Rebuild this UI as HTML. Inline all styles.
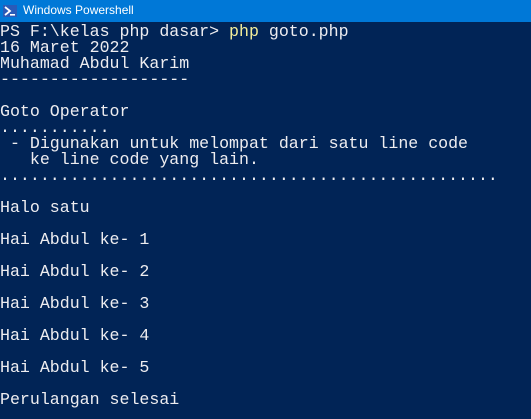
<!DOCTYPE html>
<html><head><meta charset="utf-8"><style>
html,body{margin:0;padding:0;}
body{width:531px;height:419px;overflow:hidden;background:#012456;position:relative;}
.tb{position:absolute;left:0;top:0;width:531px;height:22px;background:#0078d7;}
.tb span{position:absolute;left:23px;top:3px;font:12px "Liberation Sans",sans-serif;color:#fff;}
.tb svg{position:absolute;left:3px;top:5px;}
pre{position:absolute;left:0;top:24px;margin:0;font-family:"Liberation Mono",monospace;font-size:16.6px;line-height:16px;color:#eeedf0;letter-spacing:0;}
.y{color:#f5ef9a;}
</style></head><body>
<div class="tb"><svg width="14" height="12" viewBox="0 0 14 12"><rect width="14" height="12" fill="#2a5bb8"/><path d="M2 2 L7 6 L2 10" stroke="#fff" stroke-width="1.8" fill="none"/><rect x="7" y="9" width="5" height="1.6" fill="#fff"/></svg><span>Windows Powershell</span></div>
<pre>PS F:\kelas php dasar&gt; <span class="y">php</span> goto.php
16 Maret 2022
Muhamad Abdul Karim
-------------------

Goto Operator
...........
 - Digunakan untuk melompat dari satu line code
   ke line code yang lain.
..................................................

Halo satu

Hai Abdul ke- 1

Hai Abdul ke- 2

Hai Abdul ke- 3

Hai Abdul ke- 4

Hai Abdul ke- 5

Perulangan selesai</pre>
</body></html>
